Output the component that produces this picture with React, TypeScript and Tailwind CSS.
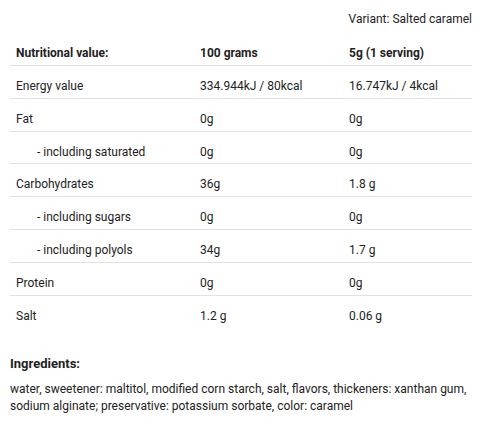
import React from "react";

const rows: { label: string; a: string; b: string; indent?: boolean }[] = [
  { label: "Energy value", a: "334.944kJ / 80kcal", b: "16.747kJ / 4kcal" },
  { label: "Fat", a: "0g", b: "0g" },
  { label: "- including saturated", a: "0g", b: "0g", indent: true },
  { label: "Carbohydrates", a: "36g", b: "1.8 g" },
  { label: "- including sugars", a: "0g", b: "0g", indent: true },
  { label: "- including polyols", a: "34g", b: "1.7 g", indent: true },
  { label: "Protein", a: "0g", b: "0g" },
  { label: "Salt", a: "1.2 g", b: "0.06 g" },
];

export default function App() {
  return (
    <div
      className="w-[482px] h-[428px] bg-white text-[#222222] px-[10px] pt-[11px]"
      style={{ fontFamily: "Roboto, 'Liberation Sans', sans-serif" }}
    >
      <div className="text-right text-[12px] leading-[16px]">Variant: Salted caramel</div>
      <div className="mt-[6px] text-[12px] leading-[16px]">
        <div className="grid grid-cols-[184px_149px_1fr] border-b border-[#e1e1e8] h-[33px] pt-[12px] pl-[6px] font-bold">
          <div>Nutritional value:</div>
          <div>100 grams</div>
          <div>5g (1 serving)</div>
        </div>
        {rows.map((r, i) => (
          <div
            key={i}
            className={`grid grid-cols-[184px_149px_1fr] pt-[12px] pl-[6px] ${i === 2 ? "h-[32px]" : "h-[33px]"} ${
              i < rows.length - 1 ? "border-b border-[#e1e1e8]" : ""
            }`}
          >
            <div className={r.indent ? "pl-[21px]" : ""}>{r.label}</div>
            <div>{r.a}</div>
            <div>{r.b}</div>
          </div>
        ))}
      </div>
      <div className="mt-[27px] font-bold text-[13px] leading-[16px]">Ingredients:</div>
      <div className="mt-[9px] text-[12px] leading-[17px]">
        water, sweetener: maltitol, modified corn starch, salt, flavors, thickeners: xanthan gum, sodium alginate; preservative: potassium sorbate, color: caramel
      </div>
    </div>
  );
}
